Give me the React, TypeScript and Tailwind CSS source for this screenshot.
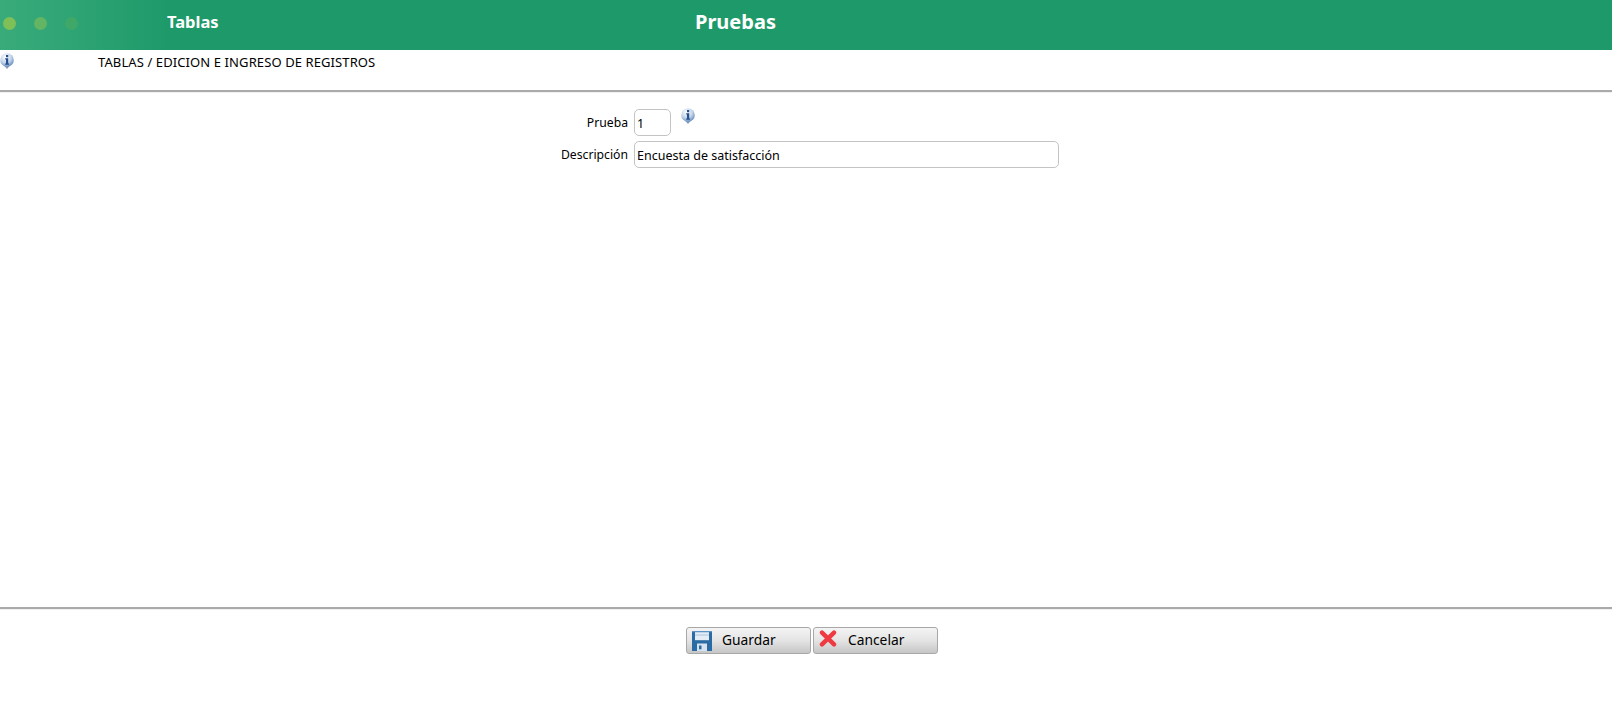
const font = { fontFamily: '"Noto Sans", sans-serif' };

function InfoIcon({ id }: { id: string }) {
  return (
    <svg width="16" height="16" viewBox="0 0 16 16">
      <defs>
        <radialGradient id={id} cx="40%" cy="30%" r="75%">
          <stop offset="0%" stopColor="#ffffff" />
          <stop offset="55%" stopColor="#c3d4ea" />
          <stop offset="100%" stopColor="#5f86b8" />
        </radialGradient>
      </defs>
      <path d="M2 9 L8 16 L14 9 Z" fill="#7f9cc2" />
      <circle cx="8" cy="7" r="6.8" fill={`url(#${id})`} />
      <rect x="7" y="2" width="2.2" height="2.2" fill="#24508f" />
      <path d="M6.2 5.2 H9.2 V10.4 H10 V11.8 H6.2 V10.4 H7 V6.6 H6.2 Z" fill="#24508f" />
    </svg>
  );
}

function SaveIcon() {
  return (
    <svg width="20" height="20" viewBox="0 0 20 20">
      <rect x="0" y="0" width="20" height="20" fill="#2a6ba3" />
      <rect x="0" y="0" width="20" height="1.2" fill="#5b93c4" />
      <rect x="3" y="1.2" width="14" height="8" fill="#e4edf5" />
      <rect x="3" y="3.5" width="14" height="1" fill="#a9c4dc" />
      <rect x="5" y="12.5" width="10" height="7.5" fill="#d6e3ef" />
      <rect x="7" y="14.5" width="2.5" height="3.8" fill="#2a6ba3" />
    </svg>
  );
}

function CancelIcon() {
  return (
    <svg width="18" height="17" viewBox="0 0 18 17" className="-mt-[4px]">
      <path d="M3 2.6 L15 14.4 M15 2.6 L3 14.4" stroke="#ee3b42" strokeWidth="4.4" strokeLinecap="round" />
    </svg>
  );
}

const buttonClass =
  "w-[125px] h-[27px] flex items-center rounded-[3px] border border-[#a8a8a8] bg-gradient-to-b from-[#f4f4f4] via-[#e4e4e4] to-[#c6c6c6] text-[13.8px]";

export default function App() {
  return (
    <div className="w-[1612px] h-[711px] bg-white text-black overflow-hidden" style={font}>
      <div className="h-[50px] bg-[#1e9a6a] flex items-center">
        <div className="w-[400px] h-full pb-[4px] flex items-center bg-gradient-to-r from-[#39ab7b] to-[#1e9a6a] to-[42%]">
          <div className="flex items-center gap-[18px] pl-[3px] w-[167px]">
            <span className="w-[13px] h-[13px] rounded-full bg-[#7fbf58]" />
            <span className="w-[13px] h-[13px] rounded-full bg-[#64b563]" />
            <span className="w-[13px] h-[13px] rounded-full bg-[#3fa868]" />
          </div>
          <span className="text-white font-bold text-[16.5px] leading-none -mt-[2px]">Tablas</span>
        </div>
        <div className="flex-1 flex pl-[295px] pb-[6px]">
          <span className="text-white font-bold text-[20px] leading-none">Pruebas</span>
        </div>
      </div>

      <div className="h-[40px] flex items-start">
        <div className="w-[98px] pt-[3px] -ml-[1px] shrink-0">
          <InfoIcon id="infoTop" />
        </div>
        <span className="ml-[1px] text-[13px] tracking-[0.1px] leading-none pt-[6px]">
          TABLAS / EDICION E INGRESO DE REGISTROS
        </span>
      </div>

      <div className="h-[3px] border-t-2 border-[#aaaaaa] bg-[#f0f0f0]" />

      <div className="h-[514px] pt-[16px] flex flex-col gap-[5px]">
        <div className="flex items-center h-[27px]">
          <label className="w-[628px] text-right text-[12.2px] pt-[1px]">Prueba</label>
          <input
            readOnly
            value="1"
            className="ml-[6px] w-[37px] h-[27px] border border-[#c4c4c4] rounded-[5px] px-[2px] pt-[2px] text-[12.5px] outline-none"
          />
          <div className="ml-[9px] -mt-[13px]">
            <InfoIcon id="infoForm" />
          </div>
        </div>
        <div className="flex items-center h-[27px]">
          <label className="w-[628px] text-right text-[12.2px] pt-[1px]">Descripción</label>
          <input
            readOnly
            value="Encuesta de satisfacción"
            className="ml-[6px] w-[425px] h-[27px] border border-[#c4c4c4] rounded-[5px] px-[2px] pt-[2px] text-[12.5px] outline-none"
          />
        </div>
      </div>

      <div className="h-[3px] border-t-2 border-[#aaaaaa] bg-[#f0f0f0]" />

      <div className="pt-[17px] pl-[686px] flex gap-[2px]">
        <button className={`${buttonClass} pl-[5px]`}>
          <SaveIcon />
          <span className="ml-[10px]">Guardar</span>
        </button>
        <button className={`${buttonClass} pl-[5px]`}>
          <CancelIcon />
          <span className="ml-[11px]">Cancelar</span>
        </button>
      </div>
    </div>
  );
}
